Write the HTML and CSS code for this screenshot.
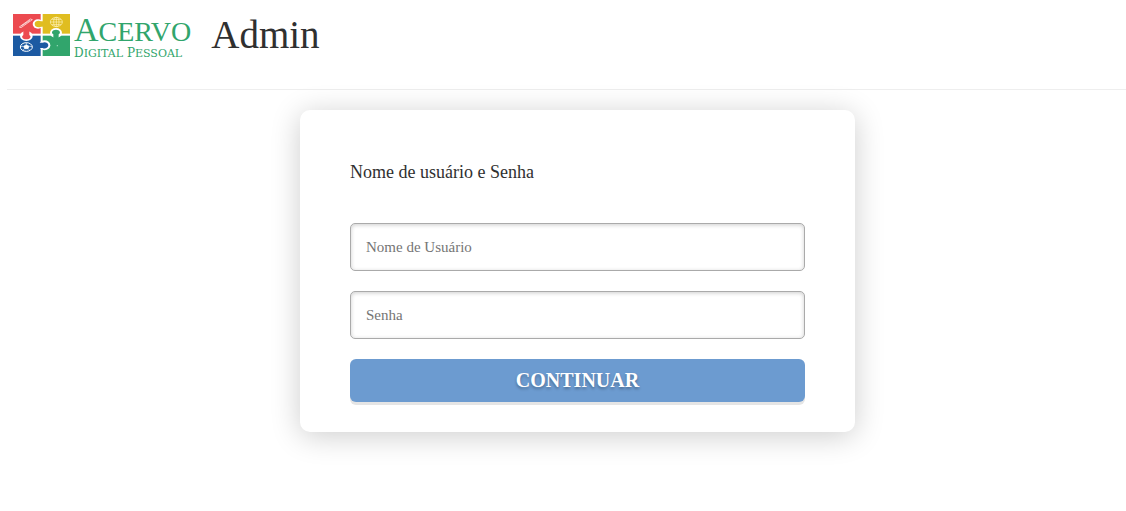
FILE: index.html
```html
<!DOCTYPE html>
<html lang="pt-BR">
<head>
<meta charset="utf-8">
<meta name="viewport" content="width=device-width, initial-scale=1">
<title>Acervo Digital Pessoal - Admin</title>
<link rel="stylesheet" href="styles.css">
</head>
<body>
<header class="header">
  <div class="brand">
    <svg class="brand-mark" viewBox="39 42 171 126" aria-hidden="true">
      <path fill="#ec4a50" d="M39 42H122V101H39z"/>
      <path fill="#e0bd20" d="M128 42H210V101H128z"/>
      <path fill="#1c5aa2" d="M39 107H122V168H39z"/>
      <path fill="#31a56c" d="M128 107H210V168H128z"/>
      <g fill="#fff">
        <ellipse cx="114" cy="72" rx="16" ry="14"/>
        <ellipse cx="79" cy="108" rx="19" ry="15"/>
        <ellipse cx="168" cy="99" rx="18" ry="15"/>
        <ellipse cx="134" cy="136" rx="17" ry="15"/>
      </g>
      <path fill="#e0bd20" d="M134 64H123C116 60 104 63 104 72S116 84 123 80H134z"/>
      <path fill="#ec4a50" d="M70 92V105C62 110 68 118 79 118S96 110 88 105V92z"/>
      <path fill="#31a56c" d="M160 116V103C152 98 157 89 168 89S184 98 176 103V116z"/>
      <path fill="#1c5aa2" d="M115 128H128C134 124 145 128 145 136S134 148 128 144H115z"/>
      <path d="M58 81L91 57L97 59L63 83zM64 78L90 61" fill="none" stroke="#fff" stroke-width="2"/>
      <g fill="none" stroke="#fff4bf" stroke-width="2">
        <ellipse cx="169" cy="66" rx="18" ry="14"/>
        <ellipse cx="169" cy="66" rx="8" ry="14"/>
        <path d="M169 52V80M151 66H187M155 58H183M155 74H183"/>
      </g>
      <ellipse cx="79" cy="141" rx="18" ry="13" fill="none" stroke="#fff" stroke-width="3"/>
      <path d="M79 134L87 139L84 146H74L71 139zM79 128V133M62 139H70M88 139H96M73 147L68 152M85 147L90 152" fill="#fff" stroke="#fff" stroke-width="2"/>
      <circle cx="172" cy="137" r="2" fill="#a5dec2"/>
    </svg>
    <div class="brand-text">
      <span class="brand-name"><span class="brand-initial">A</span>CERVO</span>
      <span class="brand-tagline">D<span class="small-cap">IGITAL</span> P<span class="small-cap">ESSOAL</span></span>
    </div>
  </div>
  <h1 class="title">Admin</h1>
</header>
<main class="main">
  <form class="card">
    <p class="intro">Nome de usuário e Senha</p>
    <input class="field" type="text" name="username" placeholder="Nome de Usuário" aria-label="Nome de Usuário">
    <input class="field" type="password" name="password" placeholder="Senha" aria-label="Senha">
    <button class="submit" type="submit">CONTINUAR</button>
  </form>
</main>
</body>
</html>
```

FILE: styles.css
```css
* {
  box-sizing: border-box;
}

body {
  margin: 0;
  background: #fff;
  color: #303030;
  font-family: Georgia, "Liberation Serif", serif;
}

.header {
  display: flex;
  align-items: flex-start;
  gap: 20px;
  margin-left: 7px;
  padding: 13px 6px 32px;
  border-bottom: 1px solid #eee;
}

.brand {
  display: flex;
  gap: 4px;
  height: 44px;
  padding-top: 1px;
  color: #31a56c;
}

.brand-mark {
  width: 57px;
  height: 42px;
}

.brand-text {
  display: flex;
  flex-direction: column;
  font-family: "Liberation Serif", serif;
  white-space: nowrap;
}

.brand-name {
  font-size: 28px;
  line-height: 32px;
}

.brand-initial {
  font-size: 34px;
}

.brand-tagline {
  font-family: "DejaVu Serif", serif;
  font-size: 12px;
  line-height: 10px;
}

.small-cap {
  font-size: 11px;
}

.title {
  margin: 0;
  font-size: 39px;
  font-weight: 400;
  line-height: 44px;
}

.main {
  padding: 20px 0 40px 29px;
}

.card {
  display: flex;
  flex-direction: column;
  gap: 20px;
  max-width: 555px;
  margin: 0 auto;
  padding: 50px 50px 30px;
  border-radius: 10px;
  background: #fff;
  box-shadow: 0 4px 30px rgba(0, 0, 0, 0.2);
}

.intro {
  margin: 0 0 19px;
  font-size: 18px;
  line-height: 24px;
}

.field {
  width: 100%;
  height: 48px;
  padding: 0 15px;
  border: 1px solid #aaa;
  border-radius: 5px;
  background: #fff;
  box-shadow: inset 0 1px 4px rgba(0, 0, 0, 0.2);
  color: #303030;
  font-family: inherit;
  font-size: 15px;
}

.field::placeholder {
  color: #757575;
  opacity: 1;
}

.submit {
  height: 43px;
  padding: 0;
  border: 0;
  border-radius: 6px;
  background: #6c9bd0;
  box-shadow: 0 3px 0 #e5e5e5;
  color: #fff;
  font-family: inherit;
  font-size: 20px;
  font-weight: 700;
  text-shadow: 0 2px 3px rgba(0, 0, 0, 0.3);
  cursor: pointer;
}
```
